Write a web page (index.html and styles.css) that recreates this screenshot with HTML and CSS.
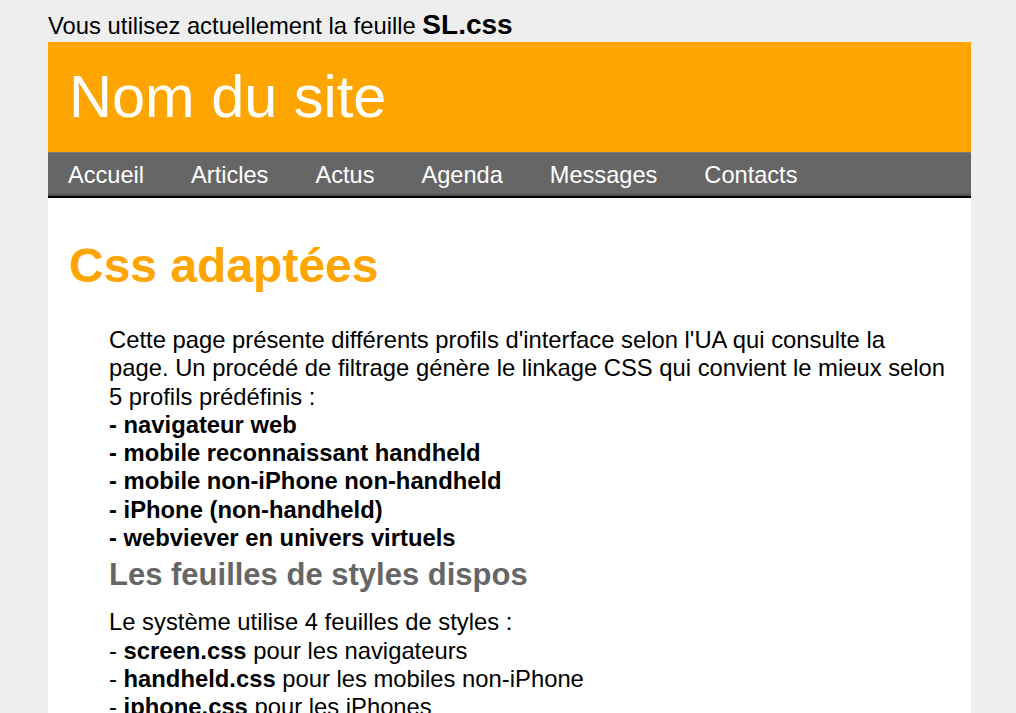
FILE: index.html
```html
<!DOCTYPE html>
<html lang="fr">
	<head>
		<meta charset="UTF-8" />
		<title>Nom du site - Css adaptées</title>
		<link rel="stylesheet" href="styles.css">
	</head>
	<body>
		<div class="stylesheet-info">
			Vous utilisez actuellement la feuille <strong>SL.css</strong>
		</div>

		<div class="page">
			<header class="site-header">
				<h1>Nom du site</h1>
			</header>

			<nav class="menu">
				<ul>
					<li><a href="#">Accueil</a></li>
					<li><a href="#">Articles</a></li>
					<li><a href="#">Actus</a></li>
					<li><a href="#">Agenda</a></li>
					<li><a href="#">Messages</a></li>
					<li><a href="#">Contacts</a></li>
				</ul>
			</nav>

			<div class="content">
				<h2>Css adaptées</h2>
				<p>
					Cette page présente différents profils d'interface selon l'UA qui consulte la page. Un procédé de filtrage génère le linkage CSS qui convient le mieux selon 5 profils prédéfinis :<br />
					<strong>- navigateur web</strong><br />
					<strong>- mobile reconnaissant handheld</strong><br />
					<strong>- mobile non-iPhone non-handheld</strong><br />
					<strong>- iPhone (non-handheld)</strong><br />
					<strong>- webviever en univers virtuels</strong>
				</p>

				<h3>Les feuilles de styles dispos</h3>
				<p>
					Le système utilise 4 feuilles de styles :<br />
					- <strong>screen.css</strong> pour les navigateurs<br />
					- <strong>handheld.css</strong> pour les mobiles non-iPhone<br />
					- <strong>iphone.css</strong> pour les iPhones<br />
					- <strong>SL.css</strong> pour les webvievers en univers virtuels
				</p>
			</div>
		</div>
	</body>
</html>
```

FILE: styles.css
```css
body {
	font-family: "Liberation Sans", Arial, Helvetica, sans-serif;
	font-size: 23.8px;
	margin: 0;
	padding: 0;
	background-color: #eeeeee;
	color: #000;
}
.stylesheet-info {
	margin-left: 48px;
	padding-top: 10px;
	height: 32px;
	line-height: 32px;
}
.stylesheet-info strong {
	font-size: 28px;
	line-height: 1;
}
.page {
	width: 923px;
	margin-left: 48px;
	background: white;
}
.site-header {
	background-color: #ffa500;
	height: 110px;
}
.site-header h1 {
	margin: 0;
	padding-left: 21px;
	font-size: 59.5px;
	font-weight: normal;
	line-height: 110px;
	color: white;
}
.menu {
	background-color: #666;
	border-top: 1px solid #7a7a7a;
	border-bottom: 2px solid #000;
	box-shadow: inset 0 -2px 0 #505050;
	height: 43px;
}
.menu ul {
	list-style: none;
	margin: 0;
	padding: 0 0 0 20px;
	display: flex;
	gap: 47px;
}
.menu li a {
	display: block;
	color: white;
	text-decoration: none;
	font-size: 23.6px;
	line-height: 44px;
}
.menu li a:hover {
	text-decoration: underline;
}
.content {
	padding: 40px 20px 20px 21px;
}
.content h2 {
	margin: 0 0 32px;
	font-size: 48px;
	line-height: 56px;
	color: #ffa500;
}
.content p {
	margin: 0 0 0 40px;
	line-height: 28.3px;
}
.content h3 {
	margin: 5px 0 15px 40px;
	font-size: 31px;
	line-height: 36px;
	color: #666;
}
```
